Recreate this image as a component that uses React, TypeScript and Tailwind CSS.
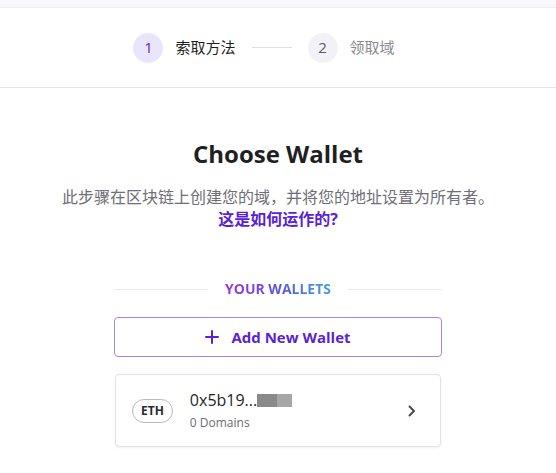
import React from 'react';

const font = { fontFamily: '"Open Sans", "Noto Sans CJK SC", sans-serif' };

const Stepper: React.FC = () => (
  <div className="flex h-[80px] items-center justify-center border-b border-[#e6e6ea] bg-white pr-[28px]">
    <div className="flex items-center">
      <div className="flex h-[30px] w-[30px] items-center justify-center rounded-full bg-[#ebe4fd] text-[15px] text-[#5b1fd6]">1</div>
      <span className="ml-[12px] text-[15px] text-[#1f1f24]">索取方法</span>
      <div className="ml-[16px] mr-[16px] h-px w-[40px] bg-[#dedee3]" />
      <div className="flex h-[30px] w-[30px] items-center justify-center rounded-full bg-[#f1f1f7] text-[15px] text-[#5a5a66]">2</div>
      <span className="ml-[12px] text-[15px] text-[#8a8a92]">领取域</span>
    </div>
  </div>
);

const WalletCard: React.FC = () => (
  <div className="flex h-[73px] items-center rounded-[4px] border border-[#e3e3e8] bg-white pl-[16px] pr-[22px] shadow-[0_1px_3px_rgba(0,0,0,0.06)]">
    <span className="flex h-[24px] items-center rounded-full border border-[#b9b9c0] px-[8px] text-[12px] font-bold text-[#2a2a30]">ETH</span>
    <div className="ml-[17px] flex flex-col">
      <div className="flex items-center text-[16px] leading-[20px] text-[#1f1f24]">
        <span>0x5b19...</span>
        <span className="mt-[2px] h-[13px] w-[20px] bg-[#8a8a8a]" />
        <span className="mt-[2px] h-[13px] w-[15px] bg-[#a6a6a6]" />
      </div>
      <span className="mt-[4px] text-[12px] text-[#6c6c74]">0 Domains</span>
    </div>
    <svg className="ml-auto" width="12" height="14" viewBox="0 0 12 14" fill="none">
      <path d="M3.5 2.5 L8 7 L3.5 11.5" stroke="#4a4a52" strokeWidth="2" strokeLinecap="round" strokeLinejoin="round" />
    </svg>
  </div>
);

export default function App() {
  return (
    <div className="min-h-[473px] w-full bg-white" style={font}>
      <div className="h-[8px] border-b border-[#ececf2] bg-[#f7f8fd]" />
      <Stepper />
      <div className="flex flex-col items-center">
        <h1 className="mt-[50px] text-[24px] font-bold leading-[32px] text-[#1f1f24]">Choose Wallet</h1>
        <p className="mt-[16px] text-[16px] leading-[22px] text-[#6e6e76]">此步骤在区块链上创建您的域，并将您的地址设置为所有者。</p>
        <a className="text-[16px] font-bold leading-[22px] text-[#5b1fd6]">这是如何运作的?</a>
        <div className="mt-[50px] w-[328px]">
          <div className="flex items-center">
            <div className="h-px flex-1 bg-[#ececf0]" />
            <span className="mx-[17px] bg-gradient-to-r from-[#a12ed4] via-[#5b50e2] to-[#3aa2d8] bg-clip-text text-[14px] font-bold leading-[18px] text-transparent">YOUR WALLETS</span>
            <div className="h-px flex-1 bg-[#ececf0]" />
          </div>
          <button className="mt-[19px] flex h-[40px] w-full items-center justify-center rounded-[4px] border border-[#a882ee] bg-white text-[15px] font-bold text-[#5b1fd6]">
            <svg width="14" height="14" viewBox="0 0 14 14" className="mr-[12px]">
              <path d="M7 1 V13 M1 7 H13" stroke="#5b1fd6" strokeWidth="2" strokeLinecap="round" />
            </svg>
            Add New Wallet
          </button>
          <div className="mt-[17px] px-px">
            <WalletCard />
          </div>
        </div>
      </div>
    </div>
  );
}
